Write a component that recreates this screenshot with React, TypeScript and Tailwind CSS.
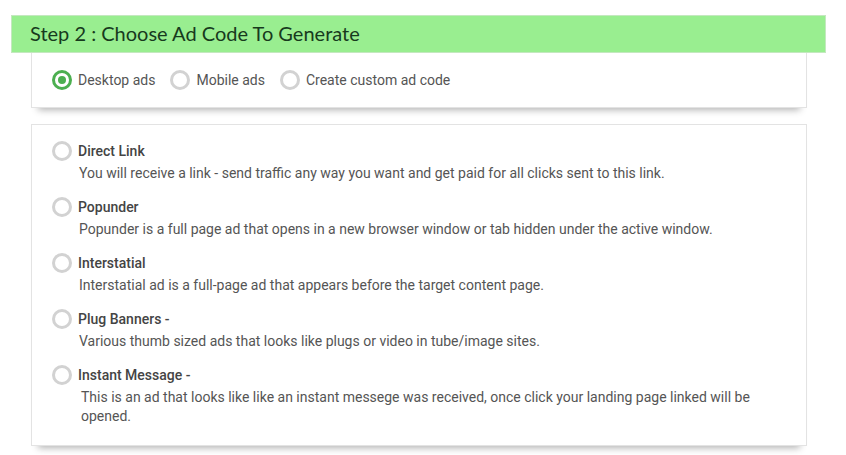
import { useState } from "react";

const adTypes = [
  {
    id: "direct",
    title: "Direct Link",
    text: "You will receive a link - send traffic any way you want and get paid for all clicks sent to this link.",
  },
  {
    id: "popunder",
    title: "Popunder",
    text: "Popunder is a full page ad that opens in a new browser window or tab hidden under the active window.",
  },
  {
    id: "interstatial",
    title: "Interstatial",
    text: "Interstatial ad is a full-page ad that appears before the target content page.",
  },
  {
    id: "plug",
    title: "Plug Banners -",
    text: "Various thumb sized ads that looks like plugs or video in tube/image sites.",
  },
  {
    id: "im",
    title: "Instant Message -",
    text: "This is an ad that looks like like an instant messege was received, once click your landing page linked will be opened.",
    indent: true,
  },
];

function Radio({ checked }: { checked: boolean }) {
  return (
    <span
      className={`flex h-5 w-5 shrink-0 items-center justify-center rounded-full border-[3px] ${
        checked ? "border-[#4caf50]" : "border-[#d2d2d2]"
      }`}
    >
      {checked && <span className="h-2 w-2 rounded-full bg-[#4caf50]" />}
    </span>
  );
}

export default function App() {
  const [platform, setPlatform] = useState("desktop");
  const [adType, setAdType] = useState("");

  return (
    <div className="min-h-screen bg-white pt-[15px] font-['Roboto',sans-serif]">
      {/* Header */}
      <div className="mx-[11px] w-[815px] border border-[#c4e8bf] bg-[#99ee90] px-[18px] pb-[8px] pt-[6px]">
        <h2 className="font-['Lato',sans-serif] text-[20px] leading-[22px] text-[#173a1d]">
          Step 2 : Choose Ad Code To Generate
        </h2>
      </div>

      {/* Platform */}
      <div className="ml-[31px] w-[776px] border border-t-0 border-[#e3e3e3] bg-white shadow-[0_9px_7px_-7px_rgba(0,0,0,0.3)]">
        <div className="flex h-[54px] items-center gap-[7px] pl-5">
          {[
            ["desktop", "Desktop ads"],
            ["mobile", "Mobile ads"],
            ["custom", "Create custom ad code"],
          ].map(([id, label]) => (
            <label
              key={id}
              onClick={() => setPlatform(id)}
              className="mr-[8px] flex cursor-pointer items-center gap-[6px] text-[14px] text-[#555]"
            >
              <Radio checked={platform === id} />
              {label}
            </label>
          ))}
        </div>
      </div>

      {/* Ad types */}
      <div className="ml-[31px] mt-4 w-[776px] border border-[#e3e3e3] bg-white pb-[19px] pl-5 pr-12 pt-[15px] shadow-[0_9px_7px_-7px_rgba(0,0,0,0.3)]">
        {adTypes.map((ad) => (
          <div key={ad.id} className="mb-[13px] last:mb-0" onClick={() => setAdType(ad.id)}>
            <label className="flex cursor-pointer items-center gap-[6px]">
              <Radio checked={adType === ad.id} />
              <span className="text-[14px] font-medium leading-[22px] text-[#444]">{ad.title}</span>
            </label>
            <p
              className={`mt-[2px] text-[14px] leading-[19px] text-[#555] ${
                ad.indent ? "pl-[29px]" : "pl-[27px]"
              }`}
            >
              {ad.text}
            </p>
          </div>
        ))}
      </div>
    </div>
  );
}
